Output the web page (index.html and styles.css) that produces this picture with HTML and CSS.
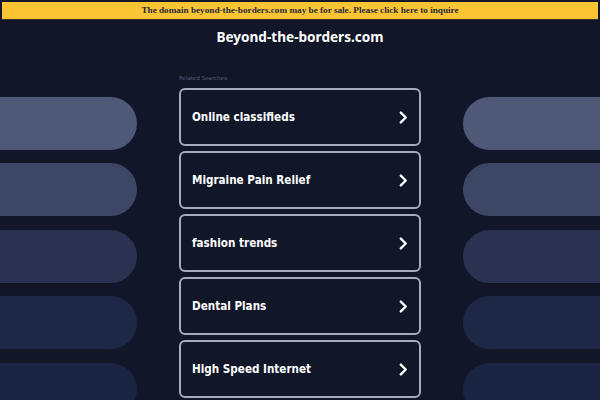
FILE: index.html
```html
<!DOCTYPE html>
<html>
<head>
<meta charset="utf-8">
<link rel="stylesheet" href="styles.css">
</head>
<body>
<div class="banner">The domain beyond-the-borders.com may be for sale. Please click here to inquire</div>
<h1 class="title">Beyond-the-borders.com</h1>
<div class="main">
  <div class="side side-left">
    <div class="pill p1"></div>
    <div class="pill p2"></div>
    <div class="pill p3"></div>
    <div class="pill p4"></div>
    <div class="pill p5"></div>
  </div>
  <div class="center">
    <div class="related">Related Searches:</div>
    <a class="card" href="#"><span>Online classifieds</span><svg class="chev" viewBox="0 0 10 14" width="9" height="13"><path d="M2 1.5 L7.5 7 L2 12.5" fill="none" stroke="#fff" stroke-width="2.6" stroke-linecap="round" stroke-linejoin="round"/></svg></a>
    <a class="card" href="#"><span>Migraine Pain Relief</span><svg class="chev" viewBox="0 0 10 14" width="9" height="13"><path d="M2 1.5 L7.5 7 L2 12.5" fill="none" stroke="#fff" stroke-width="2.6" stroke-linecap="round" stroke-linejoin="round"/></svg></a>
    <a class="card" href="#"><span>fashion trends</span><svg class="chev" viewBox="0 0 10 14" width="9" height="13"><path d="M2 1.5 L7.5 7 L2 12.5" fill="none" stroke="#fff" stroke-width="2.6" stroke-linecap="round" stroke-linejoin="round"/></svg></a>
    <a class="card" href="#"><span>Dental Plans</span><svg class="chev" viewBox="0 0 10 14" width="9" height="13"><path d="M2 1.5 L7.5 7 L2 12.5" fill="none" stroke="#fff" stroke-width="2.6" stroke-linecap="round" stroke-linejoin="round"/></svg></a>
    <a class="card" href="#"><span>High Speed Internet</span><svg class="chev" viewBox="0 0 10 14" width="9" height="13"><path d="M2 1.5 L7.5 7 L2 12.5" fill="none" stroke="#fff" stroke-width="2.6" stroke-linecap="round" stroke-linejoin="round"/></svg></a>
  </div>
  <div class="side side-right">
    <div class="pill p1"></div>
    <div class="pill p2"></div>
    <div class="pill p3"></div>
    <div class="pill p4"></div>
    <div class="pill p5"></div>
  </div>
</div>
</body>
</html>
```
FILE: styles.css
```css
html, body {
  margin: 0;
  padding: 0;
  background: #111629;
  overflow: hidden;
  height: 400px;
}
body {
  font-family: "DejaVu Sans", sans-serif;
  color: #fff;
}
.banner {
  margin: 2px 2px 0;
  height: 17px;
  line-height: 17px;
  background: #fbc433;
  border-bottom: 1px solid #3a3320;
  color: #2a2a3a;
  font-family: "Liberation Serif", serif;
  font-weight: bold;
  font-size: 9.2px;
  text-align: center;
}
.title {
  margin: 7px 0 0;
  height: 20px;
  font-family: "Noto Sans", sans-serif;
  font-weight: 700;
  font-size: 13.6px;
  line-height: 20px;
  text-align: center;
  color: #fff;
}
.main {
  display: grid;
  grid-template-columns: 1fr 242px 1fr;
  column-gap: 42px;
  margin-top: 28px;
}
.side {
  display: flex;
  flex-direction: column;
  gap: 13.4px;
  padding-top: 22px;
}
.pill {
  height: 53px;
  flex: none;
}
.side-left .pill { border-radius: 0 27px 27px 0; }
.side-right .pill { border-radius: 27px 0 0 27px; }
.p1 { background: #4f5877; }
.p2 { background: #3e4665; }
.p3 { background: #2b3251; }
.p4 { background: #1f2747; }
.p5 { background: #1c2444; }
.center {
  display: flex;
  flex-direction: column;
  gap: 5px;
}
.related {
  font-size: 5.5px;
  color: #565e75;
  height: 6px;
  line-height: 6px;
  margin-bottom: 2px;
}
.card {
  box-sizing: border-box;
  height: 58px;
  border: 2px solid #a7abbd;
  border-radius: 6px;
  display: flex;
  align-items: center;
  justify-content: space-between;
  padding: 0 11px 0 11px;
  text-decoration: none;
  color: #fff;
  font-family: "DejaVu Sans Condensed", "DejaVu Sans", sans-serif;
  font-stretch: condensed;
  font-weight: bold;
  font-size: 11.6px;
  flex: none;
}
.chev { display: block; }
```
